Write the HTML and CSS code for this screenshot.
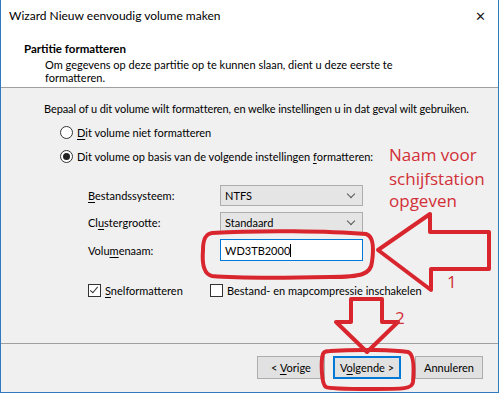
FILE: index.html
```html
<!DOCTYPE html>
<html lang="nl">
<head>
  <meta charset="UTF-8">
  <title>Wizard Nieuw eenvoudig volume maken</title>
  <link rel="stylesheet" href="styles.css">
</head>
<body>
  <div class="window">
    <div class="titlebar">
      <span class="title">Wizard Nieuw eenvoudig volume maken</span>
      <span class="close">&#x2715;</span>
    </div>
    <div class="header">
      <div class="heading">Partitie formatteren</div>
      <div class="subtitle">Om gegevens op deze partitie op te kunnen slaan, dient u deze eerste te formatteren.</div>
    </div>

    <div class="content">
      <p class="intro">Bepaal of u dit volume wilt formatteren, en welke instellingen u in dat geval wilt gebruiken.</p>

      <div class="option">
        <span class="radio"></span>
        <span><u>D</u>it volume niet formatteren</span>
      </div>
      <div class="option">
        <span class="radio checked"></span>
        <span>Dit volume op basis van de volgende instellingen <u>f</u>ormatteren:</span>
      </div>

      <div class="settings">
        <label><u>B</u>estandssysteem:</label>
        <div class="combo">NTFS<span class="chev"></span></div>
        <label>Cl<u>u</u>stergrootte:</label>
        <div class="combo">Standaard<span class="chev"></span></div>
        <label>Volu<u>m</u>enaam:</label>
        <div class="textbox">WD3TB2000<span class="caret"></span></div>
      </div>

      <div class="checks">
        <div class="check-item"><span class="checkbox checked"></span><span><u>S</u>nelformatteren</span></div>
        <div class="check-item"><span class="checkbox"></span><span>Bestand- en mapcompressie <u>i</u>nschakelen</span></div>
      </div>
    </div>

    <div class="footer">
      <button class="btn">&lt; <u>V</u>orige</button>
      <button class="btn default">V<u>o</u>lgende &gt;</button>
      <button class="btn cancel">Annuleren</button>
    </div>

    <svg class="marks" width="499" height="393" viewBox="0 0 499 393">
      <g fill="none" stroke="#d9262e" stroke-width="4" stroke-linejoin="round" stroke-linecap="round">
        <path d="M212 233 C260 230 330 231 366 234 C373 236 374 248 372 262 C371 274 362 277 330 277 C280 278 235 278 212 276 C203 274 202 262 203 250 C203 240 205 234 212 233 Z"/>
        <path d="M378 250 L430 214 L430 232 L489 232 L489 269 L431 269 L431 290 Z"/>
        <path d="M351 299 L382 299 L382 322 L398 322 L367 352 L336 322 L351 322 Z"/>
        <path d="M330 351 C360 349 395 350 408 352 C414 354 414 370 413 382 C412 389 405 389 370 389 C345 389 330 389 326 387 C321 384 321 360 323 354 C324 351 327 351 330 351 Z"/>
      </g>
      <g fill="#d22f37" font-family="Open Sans, Noto Sans, sans-serif" font-size="17">
        <text x="389" y="161">Naam voor</text>
        <text x="389" y="185">schijfstation</text>
        <text x="389" y="207">opgeven</text>
        <text x="447" y="288">1</text>
        <text x="395" y="324">2</text>
      </g>
    </svg>
  </div>
</body>
</html>
```

FILE: styles.css
```css
body {
  margin: 0;
  font-family: Lato, "Liberation Sans", sans-serif;
  font-size: 11px;
  color: #000;
  background: #fff;
}
u {
  text-decoration-thickness: 1px;
  text-underline-offset: 2px;
}
.window {
  position: relative;
  width: 499px;
  height: 393px;
  box-sizing: border-box;
  border: 1px solid #2f79bf;
  border-top: none;
  background: #f0f0f0;
}
.titlebar {
  height: 31px;
  background: #fff;
  display: flex;
  justify-content: space-between;
  align-items: center;
  padding: 0 12px 0 8px;
}
.title {
  font-size: 12px;
  margin-top: -1px;
}
.close {
  font-size: 13px;
  color: #222;
}
.header {
  height: 57px;
  background: #fff;
  border-bottom: 1px solid #a0a0a0;
  padding: 10px 0 0 23px;
  box-sizing: border-box;
}
.heading {
  font-weight: bold;
  line-height: 16px;
  font-size: 11.5px;
}
.subtitle {
  padding-left: 21px;
  width: 372px;
  line-height: 13px;
  margin-top: 1px;
}
.content {
  height: 256px;
  box-sizing: border-box;
  border-bottom: 1px solid #a0a0a0;
  padding: 13px 0 0 43px;
}
.intro {
  margin: 0 0 4px;
  line-height: 15px;
  white-space: nowrap;
  letter-spacing: -0.1px;
}
.option {
  display: flex;
  align-items: center;
  gap: 4px;
  height: 24px;
  padding-left: 16px;
}
.radio {
  width: 11px;
  height: 11px;
  border: 1px solid #333;
  border-radius: 50%;
  background: #fff;
  position: relative;
}
.radio.checked::after {
  content: "";
  position: absolute;
  left: 2px;
  top: 2px;
  width: 7px;
  height: 7px;
  border-radius: 50%;
  background: #222;
}
.settings {
  display: grid;
  grid-template-columns: 132px 143px;
  grid-template-rows: 21px 21px 22px;
  row-gap: 6px;
  align-items: center;
  margin: 17px 0 0 44px;
}
.combo, .textbox {
  height: 21px;
  box-sizing: border-box;
  display: flex;
  align-items: center;
  padding-left: 4px;
  position: relative;
}
.combo {
  background: #e5e5e5;
  border: 1px solid #adadad;
}
.chev {
  position: absolute;
  right: 8px;
  top: 5px;
  width: 5px;
  height: 5px;
  border-right: 1px solid #555;
  border-bottom: 1px solid #555;
  transform: rotate(45deg);
}
.textbox {
  background: #fff;
  border: 1px solid #0078d7;
  height: 22px;
}
.caret {
  width: 1px;
  height: 13px;
  background: #000;
}
.checks {
  display: flex;
  gap: 23px;
  margin: 23px 0 0 44px;
}
.check-item {
  display: flex;
  align-items: center;
  gap: 4px;
  min-width: 99px;
}
.checkbox {
  width: 11px;
  height: 11px;
  border: 1px solid #333;
  background: #fff;
  position: relative;
}
.checkbox.checked::after {
  content: "";
  position: absolute;
  left: 3px;
  top: 0;
  width: 3px;
  height: 7px;
  border-right: 1.5px solid #333;
  border-bottom: 1.5px solid #333;
  transform: rotate(40deg);
}
.footer {
  display: flex;
  justify-content: flex-end;
  padding: 12px 15px 0 0;
  gap: 8px;
}
.btn {
  width: 68px;
  height: 23px;
  font: inherit;
  background: #e1e1e1;
  border: 1px solid #adadad;
  padding: 0;
}
.btn.default {
  border: 2px solid #0078d7;
}
.btn.cancel {
  margin-left: 6px;
}
.marks {
  position: absolute;
  left: -1px;
  top: 0;
  pointer-events: none;
}
```
